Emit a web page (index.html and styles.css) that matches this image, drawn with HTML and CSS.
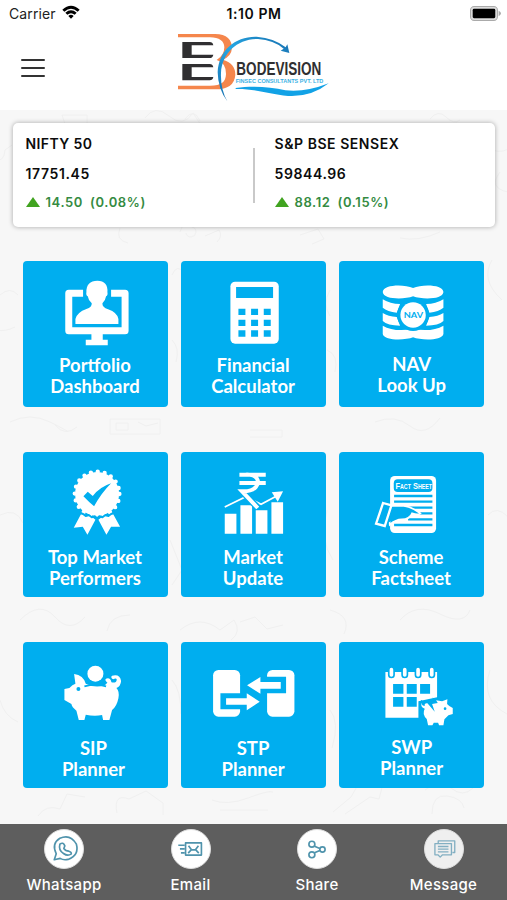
FILE: index.html
```html
<!DOCTYPE html>
<html lang="en">
<head>
<meta charset="utf-8">
<title>Bodevision</title>
<link rel="stylesheet" href="styles.css">
</head>
<body>
<div class="screen">
  <header class="top">
    <div class="status">
      <div class="carrier">Carrier
        <svg class="wifi" viewBox="0 0 54 42"><path d="M1 14Q27-10 53 14L47 20Q27 2 7 20ZM10 23Q27 9 44 23L38 29Q27 20 16 29ZM19 33Q27 25 35 33L27 41Z"/></svg>
      </div>
      <div class="time">1:10 PM</div>
      <svg class="battery" viewBox="0 0 92 44"><rect x="1.500" y="1.500" width="80" height="41" rx="11" fill="#ddd" stroke="#aaa" stroke-width="3"/><rect x="8" y="8" width="67" height="28" rx="4"/><path d="M85 14Q92 18 92 22T85 30Z" fill="#aaa"/></svg>
    </div>
    <div class="bar">
      <button class="menu" aria-label="Menu"><span></span><span></span><span></span></button>
      <svg class="logo" viewBox="0 0 495 234">
        <defs><linearGradient id="arc" x1="0" y1="1" x2="1" y2="0"><stop offset="0" stop-color="#176eae"/><stop offset=".5" stop-color="#26a8e4"/><stop offset="1" stop-color="#176eae"/></linearGradient></defs>
        <path fill="#f5864c" d="M24 18H135C171 18 186 36 186 60Q184 86 158 95Q196 106 196 140Q193 184 136 184H24V173H120C155 173 167 162 168 138Q168 104 140 96Q163 82 163 58Q162 29 120 28H24Z"/>
        <path fill="#302f31" d="M37 42H119Q128 42 130 52H65V80H130Q128 90 119 90H37ZM37 108H119Q128 108 130 118H65V147H130Q128 157 119 157H37Z"/>
        <path fill="url(#arc)" d="M172 220Q144 184 143 133C146 66 197 24 260 26Q313 30 347 58L352 49L358 75L332 68L341 62Q311 36 264 33C204 32 156 74 153 135Q151 184 172 220Z"/>
        <path fill="#12a2e6" d="M197 180C245 173 300 176 346 187Q405 194 476 166Q423 208 354 204C296 198 257 182 197 183Z"/>
        <text class="logo-name" transform="translate(199 141) scale(.725 1)">BODEVISION</text>
        <text class="logo-sub" x="197" y="164" textLength="263" lengthAdjust="spacingAndGlyphs">FINSEC CONSULTANTS PVT. LTD</text>
      </svg>
    </div>
  </header>

  <main class="content">
    <svg class="doodles" viewBox="0 0 507 714" aria-hidden="true">
      <path d="M62 5h25v9h-22zM145 8q10-14 24-2t24-3l8 12M185 9q9-12 15 2M-4 50q8 2 9-10l7-5M180 122q4-14 12-5a5 5 0 1 1-6 6M120 118q-5 12 8 15M205 126l14-6q4 6-2 12M300 125l18-6 6 10-12 5M430 9q8-10 16-2t14 3M492 40q12 4 20-4M500 62q-12 16 8 20M400 128q18 4 40-6M110 309h50v15h-50zM116 313h12v7h-12zM138 312l8 4 12-3M10 312q20-10 40 0t18 10M55 315q10 12 22 2M172 165q5-12 12-2M172 230q8 8 4 22M330 180q-8 14 0 26M327 240q12 5 8 22M492 150q-12 20 10 40M0 185q10-9 18 0M-3 220q8 2 18-3M375 312q20-8 35 4t30-8M250 320h32v7h-32M180 520q20-16 40 0l14-10q8 12-3 20M130 505q-20 0-23 16M240 512l15-5 12 12 16-4M330 500q22 6 14 24M400 510q16-18 40-6t30-4M20 510q20-20 35-3t30 0M0 405q16-8 23 8M170 430l12 30-10 15M327 400q-8 30 6 50M488 405q9-10 20 2M0 590q4 16 18 22M172 570q9 10 9 34M330 600q10 12 2 38M490 560q-10 30 17 44M38 706q8-12 22-7l7-15 18 3M117 703q-4-20 12-14l17-8 17 12v12M212 690q15 6 36-2t25-6M220 700h48M333 702l18-15 8-14 14-3M345 704l25-17 9 2 5-19M425 680q14-12 26-2t22 0M432 704q0-20 15-18t17 12"/>
    </svg>
    <section class="indices">
      <div class="index">
        <div class="name">NIFTY 50</div>
        <div class="value">17751.45</div>
        <div class="change"><i class="up"></i><span>14.50</span><span>(0.08%)</span></div>
      </div>
      <div class="index second">
        <div class="name wide">S&amp;P BSE SENSEX</div>
        <div class="value">59844.96</div>
        <div class="change"><i class="up"></i><span>88.12</span><span>(0.15%)</span></div>
      </div>
    </section>

    <nav class="tiles">
      <a class="tile">
        <svg viewBox="23 18 436 285">
          <path fill="none" stroke="#fff" stroke-width="21" stroke-linejoin="round" d="M203 115H160V227H329V115H287"/>
          <path d="M228 235H262V254H277V271H211V254H228ZM180 207V192Q185 172 213 162Q230 157 229 145Q219 137 217 124Q211 121 213 111Q212 78 246 77Q278 78 276 111Q278 121 272 124Q270 137 261 145Q260 157 278 163Q306 173 309 192V207Z"/>
        </svg>
        <span class="label">Portfolio<br>Dashboard</span>
      </a>
      <a class="tile">
        <svg viewBox="497 18 436 285">
          <rect x="645" y="80" width="145" height="186" rx="14"/>
          <path class="cut" d="M662 96H773V129H662ZM669 161h21v19h-21zM707 161h21v19h-21zM745 161h21v19h-21zM669 194h21v19h-21zM707 194h21v19h-21zM745 194h21v19h-21zM669 226h21v19h-21zM707 226h21v19h-21zM745 226h21v19h-21z"/>
        </svg>
        <span class="label">Financial<br>Calculator</span>
      </a>
      <a class="tile raised">
        <svg viewBox="267 18 436 285">
          <path d="M398 111C399 88 462 87 489 99C516 87 579 88 580 111C579 134 516 134 489 124C462 134 399 134 398 111ZM398 133Q420 147 450 147L440 173Q412 170 398 158ZM580 133Q558 147 528 147L538 173Q566 170 580 158ZM398 174Q414 184 440 186L450 212Q412 212 398 198ZM580 174Q564 184 538 186L528 212Q566 212 580 198ZM398 212Q432 232 489 222Q546 232 580 212V237C575 258 512 256 489 247C466 256 403 258 398 237Z"/>
          <circle class="cut" cx="489" cy="180" r="48"/><circle cx="489" cy="180" r="38"/>
          <text class="nav-text" x="461" y="190" textLength="58" lengthAdjust="spacingAndGlyphs">NAV</text>
        </svg>
        <span class="label">NAV<br>Look Up</span>
      </a>

      <a class="tile low">
        <svg viewBox="23 20 436 285">
          <circle cx="245" cy="146" r="66"/>
          <circle cx="245" cy="146" r="67" fill="none" stroke="#fff" stroke-width="13" stroke-dasharray="0 21.049" stroke-linecap="round"/>
          <path d="M199 202L217 213Q229 210 240 223L216 268L202 244L175 247ZM291 202L273 213Q261 210 249 223L273 268L287 244L314 244Z"/>
          <path fill="none" stroke="#00aeef" stroke-width="6" stroke-linejoin="round" d="M194 203L203 206L211 212L220 209L229 216L238 213L245 219L252 213L261 216L270 209L279 212L287 206L296 203"/>
          <path class="cut" d="M204 153L217 139L232 152Q253 125 287 114Q258 143 236 183Q221 171 204 153Z"/>
        </svg>
        <span class="label">Top Market<br>Performers</span>
      </a>
      <a class="tile low">
        <svg viewBox="497 20 436 285">
          <path d="M628 205H663V265H628ZM675 180H710V265H675ZM721 195H756V265H721ZM768 171H803V265H768Z"/>
          <path fill="none" stroke="#fff" stroke-width="5" d="M628 185L691 154L737 177L785 151"/>
          <path d="M769 141L803 138L787 169Z"/>
          <path fill="none" stroke="#00aeef" stroke-width="20" d="M684 142L724 184"/>
          <path fill="none" stroke="#fff" stroke-width="12" d="M672 88H751M672 113H751M690 88C728 86 733 109 722 124Q710 139 680 138L727 188"/>
        </svg>
        <span class="label">Market<br>Update</span>
      </a>
      <a class="tile low">
        <svg viewBox="267 20 436 285">
          <rect x="420" y="92" width="138" height="171" rx="14"/>
          <rect class="cut" x="431" y="102" width="116" height="38" rx="12"/>
          <text class="fact-text" transform="translate(436 131) scale(.8 1)">Fact Sheet</text>
          <path fill="none" stroke="#00aeef" stroke-width="7" d="M432 152H547M432 169H547M463 187H547M500 204H547M474 222H547M432 239H547"/>
          <path fill="#00aeef" stroke="#fff" stroke-width="5" d="M416 182L458 181Q487 185 511 204Q504 210 486 204Q479 222 455 222Q437 222 419 238Z"/>
          <path class="cut" d="M411 187L458 186Q478 189 490 196L478 200Q470 218 450 217Q432 219 412 234Z"/>
          <path fill="#00aeef" stroke="#fff" stroke-width="7" d="M399 173L424 180L404 242L378 235Z"/>
        </svg>
        <span class="label">Scheme<br>Factsheet</span>
      </a>

      <a class="tile last shifted">
        <svg viewBox="23 21 436 285">
          <circle cx="240" cy="116" r="24"/>
          <path d="M176 117Q204 121 211 146Q238 160 268 151L276 143Q263 132 277 130Q286 130 288 142Q303 145 304 134Q303 127 293 133Q284 127 290 122Q314 116 317 138Q316 154 303 159Q313 169 309 190Q304 215 290 225L282 255H263L260 240Q237 245 211 239L207 255H190L183 227Q169 216 168 207L147 195V162L162 159Q171 148 180 146Z"/>
          <path fill="none" stroke="#00aeef" stroke-width="5" d="M207 154Q240 144 272 154"/><circle class="cut" cx="189" cy="162" r="6"/>
        </svg>
        <span class="label">SIP<br>Planner</span>
      </a>
      <a class="tile last">
        <svg viewBox="497 21 436 285">
          <rect x="593" y="105" width="81" height="140" rx="16"/><rect x="755" y="105" width="82" height="140" rx="16"/>
          <path class="cut" d="M615 175H685V223H615ZM752 125H812V175H752Z"/>
          <path d="M632 190H694V175L733 200L694 226V209H632ZM796 141H735V126L695 151L735 176V161H796Z"/>
        </svg>
        <span class="label">STP<br>Planner</span>
      </a>
      <a class="tile last raised">
        <svg viewBox="267 21 436 285">
          <path d="M406 111H561V187L505 199V248H406Z"/>
          <path class="cut" d="M429 147h31v29h-31zM470 147h30v29h-30zM510 147h30v29h-30zM429 186h31v29h-31zM470 186h30v29h-30z"/>
          <g stroke-linecap="round"><path stroke="#00aeef" stroke-width="21" d="M424 106V119M464 106V119M504 106V119M545 106V119"/><path stroke="#fff" stroke-width="11" d="M424 104V120M464 104V120M504 104V120M545 104V120"/></g>
          <path stroke="#00aeef" stroke-width="11" paint-order="stroke" d="M518 198Q510 212 524 213Q522 204 532 205L554 230L546 207L563 204L558 196L576 199L592 193L591 207Q598 215 608 219V237L595 241L583 253L580 271H567L564 263H551L547 271H534L530 252Q515 237 524 221Q507 216 518 198Z"/>
          <circle class="cut" cx="585" cy="221" r="4"/>
        </svg>
        <span class="label">SWP<br>Planner</span>
      </a>
    </nav>
  </main>

  <footer class="actions">
    <a class="action"><span class="disc"><svg viewBox="0 0 118 118"><g class="line"><path d="M28 90L34 72Q19 41 45 25Q77 11 95 43Q104 76 70 89Q55 92 46 86Z"/><path d="M45 43Q55 35 60 48L57 56Q62 64 72 64Q82 68 79 73Q68 80 56 71Q40 61 45 43Z"/></g></svg></span><span>Whatsapp</span></a>
    <a class="action"><span class="disc"><svg viewBox="0 0 118 118"><path class="line" d="M41 39H89V76H41ZM50 48L59 60H71L80 48M49 70L58 60M81 70L72 60M19 46H38M24 57H38M27 69H38"/></svg></span><span>Email</span></a>
    <a class="action"><span class="disc"><svg viewBox="0 0 118 118"><g class="line"><path d="M50 49L66 56M50 69L66 62"/><circle cx="42" cy="43" r="9"/><circle cx="42" cy="75" r="9"/><circle cx="74" cy="59" r="8"/></g></svg></span><span>Share</span></a>
    <a class="action"><span class="disc muted"><svg viewBox="0 0 118 118"><path class="line" d="M40 41V33H90V68H83M30 41H80V75H53L46 82L39 75H30ZM39 50H71M39 58H71M39 66H71"/></svg></span><span>Message</span></a>
  </footer>
</div>
</body>
</html>
```
FILE: styles.css
```css
* { box-sizing: border-box; }
body { margin: 0; background: #f7f7f7; font-family: Inter, "Liberation Sans", sans-serif; color: #0c0c0c; }
.screen { width: 507px; height: 900px; display: flex; flex-direction: column; overflow: hidden; }
.top { height: 110px; background: #fff; flex: none; }
.status { height: 28px; display: grid; grid-template-columns: 1fr auto 1fr; align-items: center; padding: 0 6px 0 9px; font-size: 14px; }
.carrier { display: flex; align-items: center; gap: 6px; color: #222; letter-spacing: .1px; margin-top: -2px; }
.wifi { width: 18px; height: 14px; margin-top: -2px; }
.time { font-weight: 600; letter-spacing: .55px; margin: -2px 2px 0 0; }
.battery { width: 31px; height: 15px; justify-self: end; margin-top: -2px; }
.bar { display: flex; height: 78px; }
.menu { border: 0; background: none; padding: 31px 0 0 21px; width: 170px; display: flex; flex-direction: column; gap: 6px; }
.menu span { width: 24px; height: 2px; border-radius: 1px; background: #333; }
.logo { width: 165px; height: 78px; overflow: visible; }
.logo-name { font: bold 56px "Liberation Sans", sans-serif; fill: #302f31; }
.logo-sub { font: bold 16px "Liberation Sans", sans-serif; fill: #3cb1e4; }

.content { position: relative; height: 714px; flex: none; padding: 13px 13px 0; }
.doodles { position: absolute; inset: 0; width: 507px; height: 714px; fill: none; stroke: #f0f0f0; stroke-width: 1; }
.indices { position: relative; height: 104px; width: 482px; background: #fff; border-radius: 5px; box-shadow: 0 0 5px rgba(0,0,0,.33); display: flex; font-size: 14px; font-weight: 600; }
.index { flex: 0 0 241px; padding: 12px 0 0 12.500px; line-height: 18px; }
.index.second { flex: 1; padding-left: 20.500px; position: relative; }
.index.second::before { content: ""; position: absolute; left: -1px; top: 25px; width: 2px; height: 55px; background: #c9c9c9; }
.name { letter-spacing: .4px; }
.wide { letter-spacing: .55px; }
.value { margin-top: 12px; letter-spacing: .6px; }
.change { display: flex; align-items: center; gap: 7px; margin-top: 10px; font-size: 13px; letter-spacing: .6px; color: #358b42; }
.up { border: 7px solid transparent; border-top: 0; border-bottom: 10px solid #41a320; margin-right: -1px; }

.tiles { position: relative; margin: 34px 0 0 9.700px; display: grid; grid-template-columns: repeat(3, 145.500px); grid-auto-rows: 145.500px; gap: 45px 12.600px; }
.tile { background: #00aeef; border-radius: 4px; display: flex; flex-direction: column; color: #fff; overflow: hidden; }
.tile svg { width: 145.500px; height: 95px; flex: none; fill: #fff; }
.tile .cut { fill: #00aeef; }
.label { font: bold 18.500px/21px Lato, sans-serif; text-align: center; margin-top: -1px; padding-right: 1px; }
.raised .label { margin-top: -2px; padding-right: 0; }
.low .label { margin-top: 0; }
.last .label { margin-top: 1px; }
.last.raised .label { margin-top: 0; }
.shifted .label { padding-right: 4px; }
.nav-text { font: bold 25px Lato, sans-serif; fill: #00aeef; }
.fact-text { font: bold 28px "Liberation Sans", sans-serif; font-variant-caps: small-caps; fill: #fff; }

.actions { height: 76px; flex: none; background: #5e5e5e; display: grid; grid-template-columns: repeat(4, 126.500px); padding-top: 5px; color: #fff; font-size: 15px; font-weight: 500; }
.action { display: flex; flex-direction: column; align-items: center; gap: 7px; width: 128px; line-height: 18px; letter-spacing: .3px; }
.disc { width: 40px; height: 40px; border-radius: 50%; background: #fff; border: 1px solid #ddd; display: grid; place-items: center; }
.disc.muted { background: #efefef; }
.disc svg { width: 39px; height: 39px; }
.line { fill: none; stroke: #4f93ac; stroke-width: 5; stroke-linejoin: round; }
.muted .line { stroke: #82afc2; stroke-width: 4; }
```
